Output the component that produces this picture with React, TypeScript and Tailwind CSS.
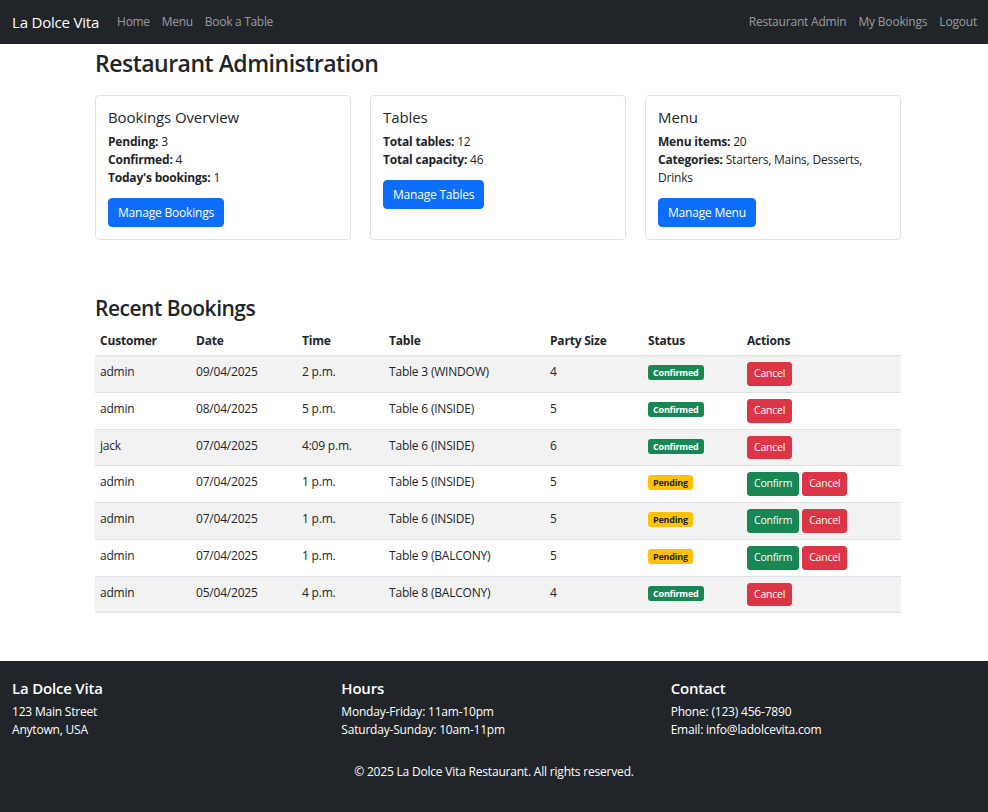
import React from "react";

const font = { fontFamily: '"Open Sans", "Noto Sans", sans-serif' };

type Row = {
  customer: string;
  date: string;
  time: string;
  table: string;
  size: string;
  status: "Confirmed" | "Pending";
};

const rows: Row[] = [
  { customer: "admin", date: "09/04/2025", time: "2 p.m.", table: "Table 3 (WINDOW)", size: "4", status: "Confirmed" },
  { customer: "admin", date: "08/04/2025", time: "5 p.m.", table: "Table 6 (INSIDE)", size: "5", status: "Confirmed" },
  { customer: "jack", date: "07/04/2025", time: "4:09 p.m.", table: "Table 6 (INSIDE)", size: "6", status: "Confirmed" },
  { customer: "admin", date: "07/04/2025", time: "1 p.m.", table: "Table 5 (INSIDE)", size: "5", status: "Pending" },
  { customer: "admin", date: "07/04/2025", time: "1 p.m.", table: "Table 6 (INSIDE)", size: "5", status: "Pending" },
  { customer: "admin", date: "07/04/2025", time: "1 p.m.", table: "Table 9 (BALCONY)", size: "5", status: "Pending" },
  { customer: "admin", date: "05/04/2025", time: "4 p.m.", table: "Table 8 (BALCONY)", size: "4", status: "Confirmed" },
];

function Card({ title, children, button }: { title: string; children: React.ReactNode; button: string }) {
  return (
    <div className="border border-[#dee2e6] rounded-[4px] p-3 bg-white">
      <h5 className="text-[15px] leading-[18px] font-medium mb-[6px] text-[#212529] tracking-[-0.1px]">{title}</h5>
      <div className="text-[12px] leading-[18px] text-[#212529] pt-[1px] mb-[11px]">{children}</div>
      <button className="bg-[#0d6efd] text-white text-[12px] leading-[18px] px-[9px] py-[4.5px] rounded-[4px] border border-[#0d6efd]">
        {button}
      </button>
    </div>
  );
}

export default function App() {
  return (
    <div style={font} className="min-h-[812px] flex flex-col bg-white text-[#212529] tracking-[-0.2px]">
      <nav className="h-[44px] bg-[#212529] flex items-center justify-between pl-3 pr-[5px]">
        <div className="flex items-center">
          <span className="text-white text-[15px] mr-[12px]">La Dolce Vita</span>
          {["Home", "Menu", "Book a Table"].map((l) => (
            <span key={l} className="text-[12px] text-[rgba(255,255,255,0.55)] px-[6px] tracking-[-0.3px]">{l}</span>
          ))}
        </div>
        <div className="flex items-center">
          {["Restaurant Admin", "My Bookings", "Logout"].map((l) => (
            <span key={l} className="text-[12px] text-[rgba(255,255,255,0.55)] px-[6px]">{l}</span>
          ))}
        </div>
      </nav>

      <main className="w-[806px] ml-[95px] pt-[4px] flex-1">
        <h1 className="text-[23px] leading-[30px] font-semibold tracking-[-0.5px] mb-[17px]">Restaurant Administration</h1>
        <div className="grid grid-cols-3 gap-[19px]">
          <Card title="Bookings Overview" button="Manage Bookings">
            <div><b>Pending:</b> 3</div>
            <div><b>Confirmed:</b> 4</div>
            <div><b>Today's bookings:</b> 1</div>
          </Card>
          <Card title="Tables" button="Manage Tables">
            <div><b>Total tables:</b> 12</div>
            <div><b>Total capacity:</b> 46</div>
          </Card>
          <Card title="Menu" button="Manage Menu">
            <div><b>Menu items:</b> 20</div>
            <div><b>Categories:</b> Starters, Mains, Desserts,<br />Drinks</div>
          </Card>
        </div>

        <h2 className="text-[21px] leading-[25px] font-semibold tracking-[-0.5px] mt-[56px] mb-[4px]">Recent Bookings</h2>
        <table className="w-full table-fixed text-[12px] leading-[18px] border-collapse">
          <colgroup>
            <col className="w-[96px]" />
            <col className="w-[106px]" />
            <col className="w-[87px]" />
            <col className="w-[161px]" />
            <col className="w-[98px]" />
            <col className="w-[99px]" />
            <col />
          </colgroup>
          <thead>
            <tr className="border-b border-[#dee2e6]">
              {["Customer", "Date", "Time", "Table", "Party Size", "Status", "Actions"].map((h) => (
                <th key={h} className="text-left font-bold px-[5px] pt-[7px] pb-[5px] align-top">{h}</th>
              ))}
            </tr>
          </thead>
          <tbody>
            {rows.map((r, i) => (
              <tr key={i} className={`border-b border-[#dee2e6] ${i % 2 === 0 ? "bg-[#f2f2f2]" : "bg-white"}`}>
                <td className="px-[5px] pt-[7px] pb-[5px] align-top">{r.customer}</td>
                <td className="px-[5px] pt-[7px] pb-[5px] align-top">{r.date}</td>
                <td className="px-[5px] pt-[7px] pb-[5px] align-top">{r.time}</td>
                <td className="px-[5px] pt-[7px] pb-[5px] align-top">{r.table}</td>
                <td className="px-[5px] pt-[7px] pb-[5px] align-top">{r.size}</td>
                <td className="px-[5px] pt-[7px] pb-[5px] align-top">
                  {r.status === "Confirmed" ? (
                    <span className="inline-block mt-[2px] bg-[#198754] text-white text-[9px] leading-[9px] font-bold px-[5px] py-[3px] rounded-[3px]">Confirmed</span>
                  ) : (
                    <span className="inline-block mt-[2px] bg-[#ffc107] text-[#212529] text-[9px] leading-[9px] font-bold px-[5px] py-[3px] rounded-[3px]">Pending</span>
                  )}
                </td>
                <td className="px-[5px] py-[6px] align-top">
                  <div className="flex gap-[3px]">
                    {r.status === "Pending" && (
                      <button className="bg-[#198754] text-white text-[10.5px] leading-[15.75px] px-[6px] py-[3px] rounded-[3px] border border-[#198754]">Confirm</button>
                    )}
                    <button className="bg-[#dc3545] text-white text-[10.5px] leading-[15.75px] px-[6px] py-[3px] rounded-[3px] border border-[#dc3545]">Cancel</button>
                  </div>
                </td>
              </tr>
            ))}
          </tbody>
        </table>
      </main>

      <footer className="bg-[#212529] text-white mt-[48px] pt-[18px] pb-[31px]">
        <div className="grid grid-cols-3">
          <div className="px-3">
            <h5 className="text-[15px] leading-[18px] font-semibold mb-[6px]">La Dolce Vita</h5>
            <p className="text-[12px] leading-[18px]">123 Main Street<br />Anytown, USA</p>
          </div>
          <div className="px-3">
            <h5 className="text-[15px] leading-[18px] font-semibold mb-[6px]">Hours</h5>
            <p className="text-[12px] leading-[18px]">Monday-Friday: 11am-10pm<br />Saturday-Sunday: 10am-11pm</p>
          </div>
          <div className="px-3">
            <h5 className="text-[15px] leading-[18px] font-semibold mb-[6px]">Contact</h5>
            <p className="text-[12px] leading-[18px]">Phone: (123) 456-7890<br />Email: info@ladolcevita.com</p>
          </div>
        </div>
        <p className="text-center text-[12px] leading-[18px] mt-[24px]">© 2025 La Dolce Vita Restaurant. All rights reserved.</p>
      </footer>
    </div>
  );
}
